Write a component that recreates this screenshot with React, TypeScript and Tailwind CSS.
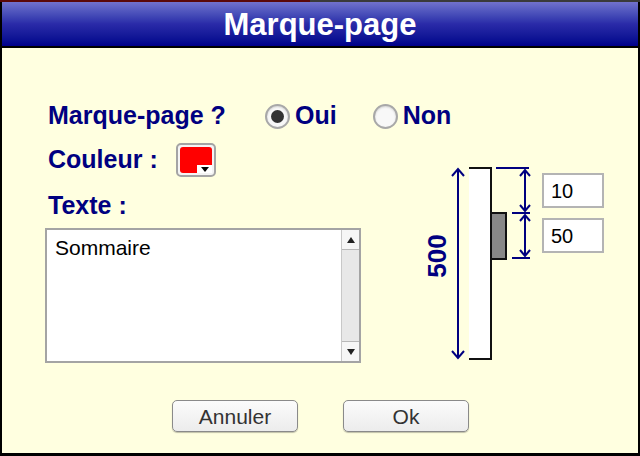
import React from 'react';

const navy = '#000080';

function Radio({ checked }: { checked: boolean }) {
  return (
    <span className="shrink-0 w-[25px] h-[25px] rounded-full border-2 border-[#a8a8a8] bg-[#f8f8f8] flex items-center justify-center shadow-[inset_0_1px_2px_rgba(0,0,0,0.15)]">
      {checked && <span className="w-[13px] h-[13px] rounded-full bg-[#333]" />}
    </span>
  );
}

function ColorSwatch() {
  return (
    <div className="relative shrink-0 w-[40px] h-[34px] rounded-[5px] border-2 border-[#a4a4a4] bg-[#f4f4f4] p-[2px]">
      <div className="w-full h-full rounded-[3px] bg-[#ff0000]" />
      <div className="absolute right-[2px] bottom-[2px] w-[15px] h-[8px] bg-white flex items-center justify-center">
        <svg width="8" height="5" viewBox="0 0 8 5">
          <path d="M0 0 L8 0 L4 5 Z" fill="#000" />
        </svg>
      </div>
    </div>
  );
}

function Diagram() {
  const c = navy;
  return (
    <svg width="120" height="208" viewBox="0 0 120 208" className="mt-[60px] shrink-0">
      {/* bar */}
      <rect x="54" y="8" width="22" height="191" fill="#fff" />
      <path d="M54 8 H76 V199 H54" fill="none" stroke="#111" strokeWidth="2" />
      <rect x="76" y="53" width="15" height="46" fill="#888" stroke="#111" strokeWidth="2" />
      {/* total arrow */}
      <line x1="43" y1="9" x2="43" y2="198" stroke={c} strokeWidth="2" />
      <path d="M37 16 L43 9 L49 16" fill="none" stroke={c} strokeWidth="2" />
      <path d="M37 191 L43 198 L49 191" fill="none" stroke={c} strokeWidth="2" />
      <text
        x="22"
        y="96"
        transform="rotate(-90 22 96)"
        textAnchor="middle"
        dominantBaseline="central"
        fontFamily="'Liberation Sans', Arial, sans-serif"
        fontWeight="bold"
        fontSize="26"
        fill={c}
      >
        500
      </text>
      {/* ticks */}
      <line x1="81" y1="8" x2="114" y2="8" stroke={c} strokeWidth="2" />
      <line x1="97" y1="53" x2="115" y2="53" stroke={c} strokeWidth="2" />
      <line x1="97" y1="98" x2="115" y2="98" stroke={c} strokeWidth="2" />
      {/* offset arrow */}
      <line x1="110" y1="10" x2="110" y2="51" stroke={c} strokeWidth="2" />
      <path d="M105 16 L110 10 L115 16" fill="none" stroke={c} strokeWidth="2" />
      <path d="M105 45 L110 51 L115 45" fill="none" stroke={c} strokeWidth="2" />
      {/* height arrow */}
      <line x1="110" y1="55" x2="110" y2="96" stroke={c} strokeWidth="2" />
      <path d="M105 61 L110 55 L115 61" fill="none" stroke={c} strokeWidth="2" />
      <path d="M105 90 L110 96 L115 90" fill="none" stroke={c} strokeWidth="2" />
    </svg>
  );
}

function NumField({ value }: { value: string }) {
  return (
    <div className="w-[62px] h-[35px] border-2 border-[#b4b4b4] bg-white flex items-center pl-[7px] text-[20px] text-black">
      {value}
    </div>
  );
}

function DialogButton({ label }: { label: string }) {
  return (
    <button className="w-[126px] h-[32px] rounded-[5px] border border-[#8a8a8a] bg-gradient-to-b from-[#fbfbfb] to-[#ececec] shadow-[0_1px_1px_rgba(0,0,0,0.25)] text-[21px] text-[#333] leading-none">
      {label}
    </button>
  );
}

export default function App() {
  return (
    <div
      className="w-[640px] h-[456px] flex flex-col bg-black overflow-hidden"
      style={{ fontFamily: "'Liberation Sans', Arial, sans-serif" }}
    >
      {/* top strip */}
      <div className="h-[2px] flex shrink-0">
        <div className="w-[310px] bg-[#5a0808]" />
        <div className="flex-1 bg-[#3a3a3a]" />
      </div>

      <div className="flex-1 flex flex-col mx-[2px] mb-[3px]">
        {/* title bar */}
        <div className="h-[44px] shrink-0 bg-gradient-to-b from-[#7272cc] via-[#2a2aa8] to-[#00008a] flex items-center justify-center">
          <span className="text-white font-bold text-[31px] leading-none">Marque-page</span>
        </div>
        <div className="h-[2px] bg-black shrink-0" />

        {/* body */}
        <div className="flex-1 bg-[#ffffe0] flex flex-col pt-[52px]">
          <div className="flex">
            {/* left column */}
            <div className="ml-[43px] w-[316px] shrink-0 flex flex-col gap-3">
              <div className="h-[32px] flex items-center pl-[3px] font-bold text-[25px] whitespace-nowrap" style={{ color: navy }}>
                <span className="w-[217px] shrink-0">Marque-page ?</span>
                <Radio checked />
                <span className="ml-[5px] shrink-0">Oui</span>
                <span className="ml-[36px] shrink-0">
                  <Radio checked={false} />
                </span>
                <span className="ml-[5px] shrink-0">Non</span>
              </div>
              <div className="h-[32px] flex items-center pl-[3px] font-bold text-[25px] whitespace-nowrap" style={{ color: navy }}>
                <span className="w-[128px] shrink-0">Couleur :</span>
                <ColorSwatch />
              </div>
              <div className="h-[32px] flex items-center pl-[3px] pt-[4px] font-bold text-[25px]" style={{ color: navy }}>
                <span>Texte :</span>
              </div>
              <div className="mt-[-4px] h-[135px] border-2 border-[#a4a4a4] bg-white flex">
                <div className="flex-1 pl-[8px] pt-[5px] text-[21px] text-black leading-tight">Sommaire</div>
                <div className="w-[18px] flex flex-col border-l border-[#c8c8c8] bg-[#e8e8e8]">
                  <div className="h-[20px] bg-[#f6f6f6] border-b border-[#b8b8b8] flex items-center justify-center">
                    <svg width="8" height="6" viewBox="0 0 8 6">
                      <path d="M0 6 L8 6 L4 0 Z" fill="#222" />
                    </svg>
                  </div>
                  <div className="flex-1" />
                  <div className="h-[20px] bg-[#f6f6f6] border-t border-[#b8b8b8] flex items-center justify-center">
                    <svg width="8" height="6" viewBox="0 0 8 6">
                      <path d="M0 0 L8 0 L4 6 Z" fill="#222" />
                    </svg>
                  </div>
                </div>
              </div>
            </div>

            {/* right diagram */}
            <div className="ml-[54px] flex">
              <Diagram />
              <div className="ml-[7px] mt-[73px] flex flex-col gap-[10px]">
                <NumField value="10" />
                <NumField value="50" />
              </div>
            </div>
          </div>

          <div className="mt-[32px] flex pl-[170px] gap-[45px]">
            <DialogButton label="Annuler" />
            <DialogButton label="Ok" />
          </div>
        </div>
      </div>
    </div>
  );
}
